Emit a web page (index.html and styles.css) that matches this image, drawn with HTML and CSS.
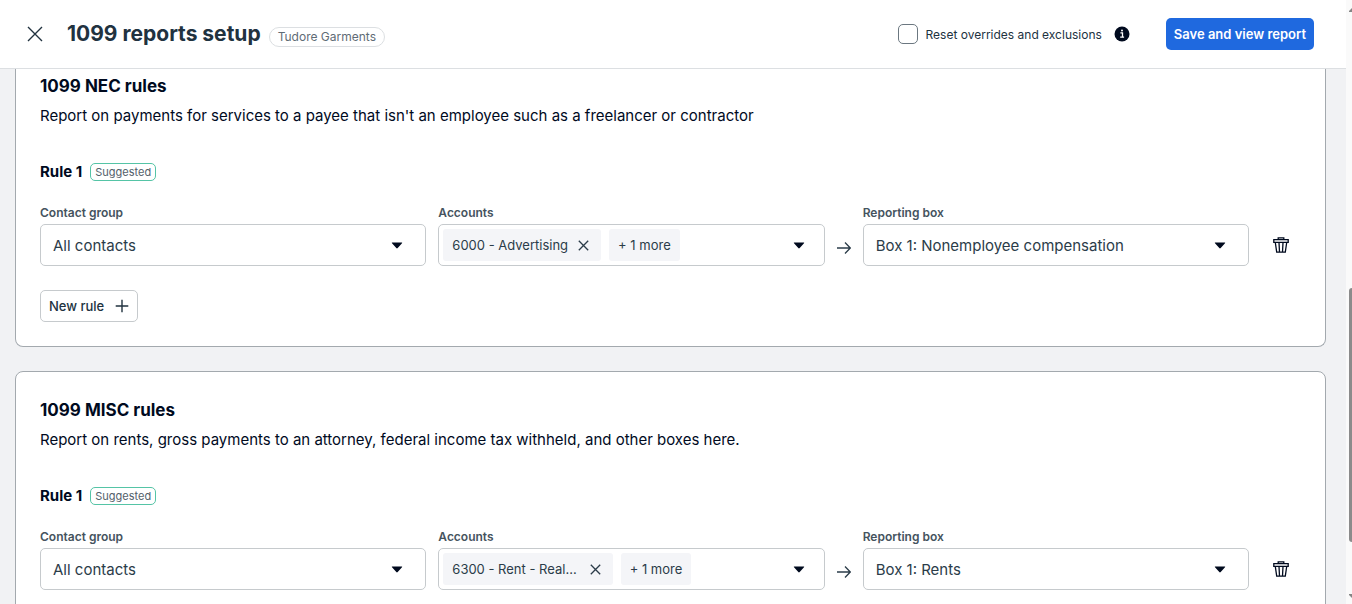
FILE: index.html
```html
<!DOCTYPE html>
<html lang="en">
<head>
    <meta charset="UTF-8">
    <meta name="viewport" content="width=device-width, initial-scale=1.0">
    <title>1099 reports setup</title>
    <link rel="stylesheet" href="styles.css">
</head>
<body>
    <div class="page">
        <header class="header">
            <button class="icon-button" type="button" aria-label="Close">
                <svg width="16" height="16" viewBox="0 0 16 16" fill="none" stroke="currentColor" stroke-width="1.4"><path d="M1 1l14 14M15 1L1 15"/></svg>
            </button>
            <div class="title-group">
                <h1>1099 reports setup</h1>
                <span class="org-tag">Tudore Garments</span>
            </div>
            <div class="reset-option">
                <input type="checkbox" id="reset">
                <label for="reset">Reset overrides and exclusions</label>
                <button class="info-button" type="button" aria-label="More information">
                    <svg width="16" height="16" viewBox="0 0 16 16"><circle cx="8" cy="8" r="7.5" fill="#000a1e"/><path d="M6.4 6.900h2.100v4M6.200 11.100h3.900" fill="none" stroke="#fff" stroke-width="1.300"/><circle cx="8" cy="4.500" r="1" fill="#fff"/></svg>
                </button>
            </div>
            <button class="primary-button" type="button">Save and view report</button>
        </header>

        <main class="content">
            <section class="card card-first">
                <h2>1099 NEC rules</h2>
                <p class="description">Report on payments for services to a payee that isn't an employee such as a freelancer or contractor</p>
                <div class="rule-title">
                    <h3>Rule 1</h3>
                    <span class="badge">Suggested</span>
                </div>
                <div class="rule-row">
                    <div class="field">
                        <label for="nec-group">Contact group</label>
                        <div class="select-box">
                            <select id="nec-group"><option>All contacts</option></select>
                            <svg class="caret" width="12" height="7" viewBox="0 0 12 7"><path d="M1.2.5h9.6q.8 0 .2.7L6.7 6q-.7.8-1.4 0L1 1.200Q.4.5 1.200.5z"/></svg>
                        </div>
                    </div>
                    <div class="field">
                        <span class="label" id="nec-accounts">Accounts</span>
                        <div class="multi-select" role="group" aria-labelledby="nec-accounts">
                            <span class="chip">6000 - Advertising
                                <button class="chip-remove" type="button" aria-label="Remove account">
                                    <svg width="11" height="11" viewBox="0 0 11 11" fill="none" stroke="currentColor" stroke-width="1.3"><path d="M.8.8l9.400 9.400M10.200.8L.8 10.200"/></svg>
                                </button>
                            </span>
                            <span class="chip">+ 1 more</span>
                            <button class="open-button" type="button" aria-label="Open accounts">
                                <svg width="12" height="7" viewBox="0 0 12 7"><path d="M1.200.5h9.600q.8 0 .2.7L6.700 6q-.7.8-1.400 0L1 1.200Q.4.5 1.200.5z"/></svg>
                            </button>
                        </div>
                    </div>
                    <svg class="arrow" width="14" height="14" viewBox="0 0 14 14" fill="none" stroke="currentColor" stroke-width="1.3"><path d="M0 7h13M8 1.500L13.300 7 8 12.500"/></svg>
                    <div class="field">
                        <label for="nec-box">Reporting box</label>
                        <div class="select-box">
                            <select id="nec-box"><option>Box 1: Nonemployee compensation</option></select>
                            <svg class="caret" width="12" height="7" viewBox="0 0 12 7"><path d="M1.200.5h9.600q.8 0 .2.7L6.700 6q-.7.8-1.400 0L1 1.200Q.4.5 1.200.5z"/></svg>
                        </div>
                    </div>
                    <button class="delete-button" type="button" aria-label="Delete rule">
                        <svg width="16" height="16" viewBox="0 0 16 16" fill="none" stroke="currentColor" stroke-width="1.300"><path d="M5.200 2.600V.8h5.600v1.800M.8 2.700h14.400v2.600H.8zM2.300 5.500l1.400 9.700h8.600l1.400-9.700M6 5.500l.5 9.500M10 5.500L9.500 15"/></svg>
                    </button>
                </div>
                <button class="new-rule" type="button">
                    New rule
                    <svg width="14" height="14" viewBox="0 0 14 14" fill="none" stroke="currentColor" stroke-width="1.400"><path d="M7 .7v12.600M.7 7h12.600"/></svg>
                </button>
            </section>

            <section class="card">
                <h2>1099 MISC rules</h2>
                <p class="description">Report on rents, gross payments to an attorney, federal income tax withheld, and other boxes here.</p>
                <div class="rule-title">
                    <h3>Rule 1</h3>
                    <span class="badge">Suggested</span>
                </div>
                <div class="rule-row">
                    <div class="field">
                        <label for="misc-group">Contact group</label>
                        <div class="select-box">
                            <select id="misc-group"><option>All contacts</option></select>
                            <svg class="caret" width="12" height="7" viewBox="0 0 12 7"><path d="M1.200.5h9.600q.8 0 .2.7L6.700 6q-.7.8-1.400 0L1 1.200Q.4.5 1.200.5z"/></svg>
                        </div>
                    </div>
                    <div class="field">
                        <span class="label" id="misc-accounts">Accounts</span>
                        <div class="multi-select" role="group" aria-labelledby="misc-accounts">
                            <span class="chip chip-shortened">6300 - Rent - Real...
                                <button class="chip-remove" type="button" aria-label="Remove account">
                                    <svg width="11" height="11" viewBox="0 0 11 11" fill="none" stroke="currentColor" stroke-width="1.300"><path d="M.8.8l9.400 9.400M10.200.8L.8 10.200"/></svg>
                                </button>
                            </span>
                            <span class="chip">+ 1 more</span>
                            <button class="open-button" type="button" aria-label="Open accounts">
                                <svg width="12" height="7" viewBox="0 0 12 7"><path d="M1.200.5h9.600q.8 0 .2.7L6.700 6q-.7.8-1.400 0L1 1.200Q.4.5 1.200.5z"/></svg>
                            </button>
                        </div>
                    </div>
                    <svg class="arrow" width="14" height="14" viewBox="0 0 14 14" fill="none" stroke="currentColor" stroke-width="1.300"><path d="M0 7h13M8 1.500L13.300 7 8 12.500"/></svg>
                    <div class="field">
                        <label for="misc-box">Reporting box</label>
                        <div class="select-box">
                            <select id="misc-box"><option>Box 1: Rents</option></select>
                            <svg class="caret" width="12" height="7" viewBox="0 0 12 7"><path d="M1.200.5h9.600q.8 0 .2.7L6.700 6q-.7.8-1.400 0L1 1.200Q.4.5 1.200.5z"/></svg>
                        </div>
                    </div>
                    <button class="delete-button" type="button" aria-label="Delete rule">
                        <svg width="16" height="16" viewBox="0 0 16 16" fill="none" stroke="currentColor" stroke-width="1.300"><path d="M5.200 2.600V.8h5.600v1.800M.8 2.700h14.400v2.600H.8zM2.300 5.500l1.400 9.700h8.600l1.400-9.700M6 5.500l.5 9.500M10 5.500L9.500 15"/></svg>
                    </button>
                </div>
            </section>
        </main>
    </div>

    <div class="scrollbar" aria-hidden="true">
        <svg width="3" height="4" viewBox="0 0 3 4"><path d="M3 0v4H0V3z"/></svg>
        <div class="thumb"></div>
        <svg width="3" height="4" viewBox="0 0 3 4"><path d="M0 0h3v4L0 1z"/></svg>
    </div>
</body>
</html>
```
FILE: styles.css
```css
* {
    box-sizing: border-box;
}
body {
    display: flex;
    height: 100vh;
    margin: 0;
    overflow: hidden;
    background-color: #f1f2f4;
    color: #000a1e;
    font-family: Inter, "Liberation Sans", sans-serif;
    font-size: 15px;
}
h1, h2, h3, p {
    margin: 0;
}
button, select, input {
    margin: 0;
    font-family: inherit;
    color: inherit;
}
button {
    display: flex;
    align-items: center;
    justify-content: center;
    padding: 0;
    border: none;
    background: none;
    cursor: pointer;
}
.page {
    display: flex;
    flex-direction: column;
    flex: 1;
    min-width: 0;
}

/* Header */
.header {
    display: flex;
    align-items: center;
    flex: none;
    height: 69px;
    padding: 0 32px 0 27px;
    background-color: #ffffff;
    border-bottom: 1px solid #dcdfe2;
    color: #21323f;
}
.icon-button {
    margin-right: 24px;
}
.title-group {
    display: flex;
    align-items: baseline;
    gap: 8px;
}
h1 {
    font-size: 21px;
    font-weight: 700;
    line-height: 28px;
}
.org-tag {
    padding: 0 8px;
    border: 1px solid #dcdfe2;
    border-radius: 10px;
    color: #5f6c76;
    font-size: 12px;
    line-height: 18px;
}
.reset-option {
    display: flex;
    align-items: center;
    gap: 8px;
    margin-left: auto;
    margin-right: 36px;
    font-size: 12px;
}
.reset-option input {
    appearance: none;
    width: 20px;
    height: 20px;
    border: 1px solid #6b7780;
    border-radius: 5px;
    background-color: #ffffff;
}
.info-button {
    margin-left: 4px;
}
.primary-button {
    height: 32px;
    padding: 0 8px;
    border-radius: 5px;
    background-color: #1f69df;
    color: #ffffff;
    font-size: 13px;
    font-weight: 600;
}

/* Cards */
.content {
    display: flex;
    flex-direction: column;
    flex: 1;
    gap: 24px;
    min-height: 0;
    padding: 0 20px 24px 15px;
    overflow: hidden;
}
.card {
    flex: none;
    padding: 24px;
    border: 1px solid #a3a9ae;
    border-radius: 8px;
    background-color: #ffffff;
}
.card-first {
    padding-top: 3px;
    border-top: none;
    border-top-left-radius: 0;
    border-top-right-radius: 0;
}
h2 {
    font-size: 17px;
    font-weight: 700;
    line-height: 28px;
}
.description {
    margin-top: 4px;
    line-height: 24px;
}
.rule-title {
    display: flex;
    align-items: center;
    gap: 8px;
    margin-top: 32px;
}
h3 {
    font-size: 15px;
    font-weight: 700;
    line-height: 24px;
}
.badge {
    padding: 0 4px;
    border: 1px solid #55c4a6;
    border-radius: 5px;
    color: #53606a;
    font-size: 11px;
    line-height: 16px;
}
.rule-row {
    display: grid;
    grid-template-columns: 1fr 1fr 14px 1fr 40px;
    align-items: end;
    column-gap: 12px;
    margin-top: 18px;
    color: #2b3c49;
}
.field label,
.field .label {
    display: block;
    color: #45535e;
    font-size: 12px;
    font-weight: 600;
    line-height: 22px;
}
.select-box {
    position: relative;
}
.select-box select {
    appearance: none;
    display: block;
    width: 100%;
    height: 42px;
    padding: 0 40px 0 12px;
    border: 1px solid #c6cacd;
    border-radius: 5px;
    background-color: #ffffff;
    font-size: 15px;
}
.caret {
    position: absolute;
    top: 18px;
    right: 23px;
    fill: #000a1e;
    pointer-events: none;
}
.multi-select {
    display: flex;
    align-items: center;
    gap: 8px;
    height: 42px;
    padding: 0 19px 0 4px;
    border: 1px solid #c6cacd;
    border-radius: 5px;
}
.chip {
    display: flex;
    align-items: center;
    gap: 10px;
    height: 32px;
    padding: 0 9px;
    border-radius: 3px;
    background-color: #f4f5f8;
    font-size: 13px;
}
.chip-shortened {
    gap: 13px;
}
.chip-remove {
    margin-right: 3px;
}
.open-button {
    margin-left: auto;
    fill: #000a1e;
}
.arrow {
    margin-bottom: 11px;
}
.delete-button {
    height: 42px;
    color: #000a1e;
}
.new-rule {
    gap: 11px;
    height: 32px;
    margin-top: 24px;
    padding: 0 8px;
    border: 1px solid #c6cacd;
    border-radius: 5px;
    color: #21323f;
    font-size: 13px;
    font-weight: 500;
}

/* Scrollbar at the window edge */
.scrollbar {
    display: flex;
    flex-direction: column;
    align-items: flex-end;
    justify-content: space-between;
    width: 6px;
    padding: 8px 0 6px;
    background-color: #fafafa;
    fill: #858585;
}
.thumb {
    width: 3px;
    height: 42vh;
    margin-top: 37vh;
    border-radius: 3px 0 0 3px;
    background-color: #8b8b8b;
}
```
